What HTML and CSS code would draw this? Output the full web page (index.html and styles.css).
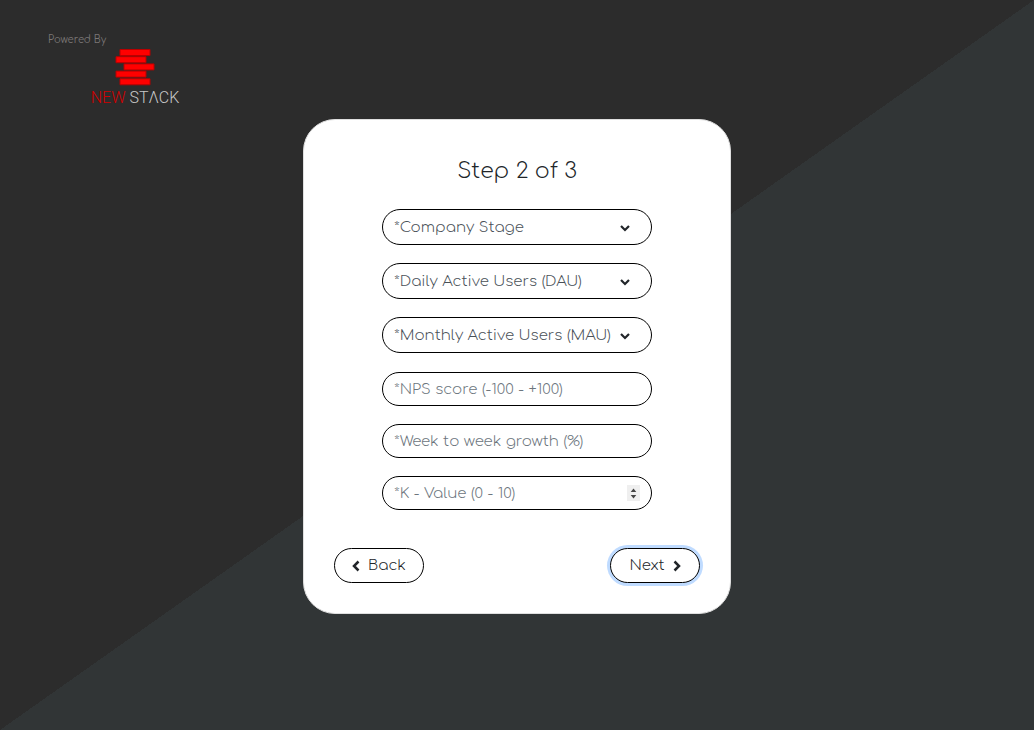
FILE: index.html
```html
<!DOCTYPE html>
<html lang="en">
<head>
<meta charset="utf-8">
<meta name="viewport" content="width=device-width, initial-scale=1">
<title>Step 2 of 3</title>
<link rel="stylesheet" href="styles.css">
</head>
<body>
<header class="brand">
  <p class="powered">Powered By</p>
  <div class="logo">
    <svg class="logo-mark" viewBox="0 0 40 38" aria-hidden="true">
      <path d="M5 1.500h30v6H5zM1 8.700h30v6H1zM9 15.900h30v6H9zM1 23.100h30v6H1zM5 30.800h30v6H5z"/>
    </svg>
    <p class="logo-name"><span class="logo-new">NEW</span> STΛCK</p>
  </div>
</header>
<main>
  <form class="card">
    <h1 class="title">Step 2 of 3</h1>
    <div class="fields">
      <div class="group">
        <select class="field select" aria-label="Company Stage"><option>*Company Stage</option></select>
        <select class="field select" aria-label="Daily Active Users"><option>*Daily Active Users (DAU)</option></select>
        <select class="field select" aria-label="Monthly Active Users"><option>*Monthly Active Users (MAU)</option></select>
      </div>
      <div class="group">
        <input class="field input" type="text" aria-label="NPS score" placeholder="*NPS score (-100 - +100)">
        <input class="field input" type="text" aria-label="Week to week growth" placeholder="*Week to week growth (%)">
        <div class="number">
          <input class="field input" type="number" min="0" max="10" aria-label="K - Value" placeholder="*K - Value (0 - 10)">
          <svg class="spinner" viewBox="0 0 13 16" aria-hidden="true"><path d="M6.500 3.500 9.300 7H3.700zM6.500 13.500 9.300 10H3.700z"/></svg>
        </div>
      </div>
    </div>
    <div class="actions">
      <button class="btn" type="button">
        <svg class="chevron" viewBox="0 0 8 12" aria-hidden="true"><path d="M6.500 1.500 2 6l4.500 4.500"/></svg>
        Back
      </button>
      <button class="btn btn-next" type="button">
        Next
        <svg class="chevron" viewBox="0 0 8 12" aria-hidden="true"><path d="M1.500 1.500 6 6l-4.500 4.500"/></svg>
      </button>
    </div>
  </form>
</main>
</body>
</html>
```
FILE: styles.css
```css
* { box-sizing: border-box; }

body {
  margin: 0;
  min-height: 100vh;
  background: linear-gradient(to bottom right, #2c2c2c 50%, #313536 50%);
  color: #212529;
  font-family: Comfortaa, Quicksand, Lato, sans-serif;
  font-weight: 300;
  font-size: 15px;
}

.brand { padding: 31px 48px 0; height: 119px; }
.powered { margin: 0; font-size: 10px; line-height: 17px; font-weight: 400; color: #7b7777; }
.logo {
  display: flex;
  flex-direction: column;
  align-items: center;
  width: 90px;
  margin-left: 42px;
}
.logo-mark { width: 40px; height: 38px; fill: #f00; stroke: #b80000; stroke-width: 1; }
.logo-name {
  margin: 4px 0 0;
  font-family: Roboto, "Liberation Sans", sans-serif;
  font-size: 16px;
  line-height: 16px;
  white-space: nowrap;
  color: #c8c8c8;
}
.logo-new { color: #d00000; }

.card {
  width: 428px;
  max-width: 100%;
  margin: 0 auto;
  padding: 37px 30px 30px;
  border: 1px solid #dfdfdf;
  border-radius: 32px;
  background: #fff;
}
.title { margin: 0 0 23px; font-size: 22px; line-height: 29px; font-weight: 300; text-align: center; }
.fields { display: grid; gap: 19px; max-width: 270px; margin: 0 auto; }
.group { display: grid; gap: 18px; }
.field {
  display: block;
  width: 100%;
  border: 1px solid #000;
  border-radius: 18px;
  padding: 0 11px;
  font: inherit;
  background-color: #fff;
}
.select {
  appearance: none;
  height: 36px;
  color: #495057;
  background-image: url("data:image/svg+xml,%3Csvg xmlns='http://www.w3.org/2000/svg' viewBox='0 0 10 8'%3E%3Cpath d='M1 2 5 6 9 2' fill='none' stroke='%23212529' stroke-width='2.200'/%3E%3C/svg%3E");
  background-repeat: no-repeat;
  background-position: right 21px top 14px;
  background-size: 10px 8px;
}
.input { height: 34px; }
.input::placeholder { color: #6c757d; opacity: 1; }
.input::-webkit-inner-spin-button { appearance: none; }
.number { position: relative; }
.spinner {
  position: absolute;
  top: 9px;
  right: 12px;
  width: 13px;
  height: 16px;
  background: #efefef;
  fill: #444;
  pointer-events: none;
}

.actions { display: flex; justify-content: space-between; margin-top: 38px; }
.btn {
  display: flex;
  align-items: center;
  justify-content: center;
  gap: 8px;
  width: 90px;
  height: 35px;
  border: 1px solid #000;
  border-radius: 18px;
  padding: 0;
  font: inherit;
  color: #212529;
  background: #fff;
}
.btn-next { box-shadow: 0 0 0 3px #bfdbff; }
.chevron { width: 8px; height: 12px; fill: none; stroke: currentColor; stroke-width: 2.500; }
```
